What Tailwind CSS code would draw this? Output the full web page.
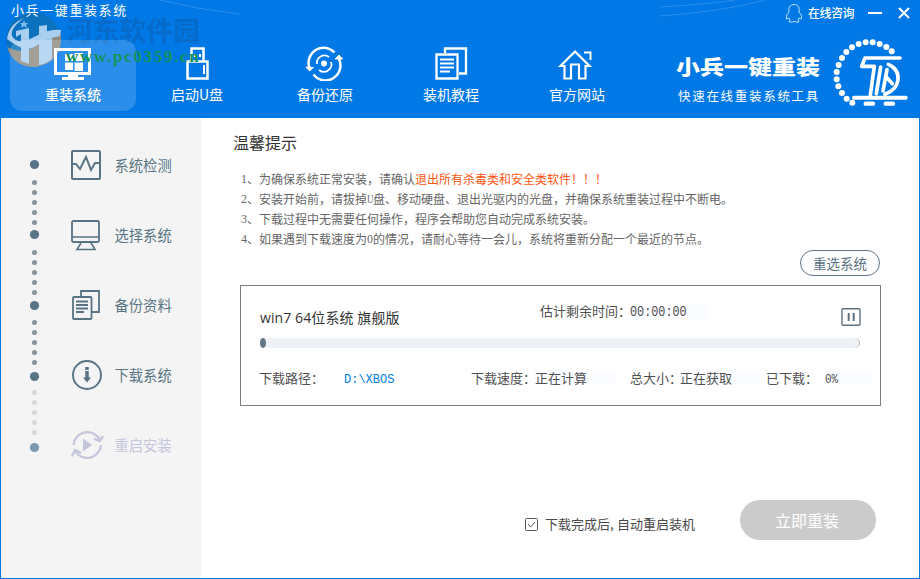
<!DOCTYPE html>
<html lang="zh-CN">
<head>
<meta charset="utf-8">
<title>小兵一键重装系统</title>
<script src="https://cdn.jsdelivr.net/npm/@tailwindcss/browser@4"></script>
</head>
<body class="w-[920px] h-[579px] overflow-hidden bg-white font-['Noto_Sans_CJK_SC',sans-serif]">
<div class="relative flex flex-col w-[920px] h-[579px] border-x border-b border-[#0078e0]">
  <header class="relative flex h-[118px] shrink-0 bg-[#0078e6] text-white -mx-px px-px">
    <svg class="absolute left-0 top-0" width="920" height="118" fill="none" stroke="#3a9af0" stroke-width=".7"><path d="M160 0Q200 10 240 14M660 7Q710 4 735 0M660 16Q720 12 765 0"/></svg>
    <!-- watermark emblem -->
    <svg class="absolute left-[4px] top-[10px]" width="60" height="60" viewBox="0 0 60 60">
      <circle cx="29" cy="29" r="27" fill="#0c72bd"/>
      <path d="M3 37Q20 46 36 33T57 24Q59 52 32 57Q10 58 3 37Z" fill="#8e8c84"/>
      <path d="M3 29Q5 14 20 8Q6 18 8 26Q14 36 30 27T57 20L56 26Q42 28 32 36T3 29ZM12 27V21L25 18V54L17 51V24ZM35 55V16L43 15V30L48 28V49Q42 54 35 55Z" fill="#a9cff0"/>
      <path d="m20 10 1 3h3l-2 2 1 3-3-2-3 2 1-3-2-2h3Z" fill="#80bff3"/>
    </svg>
    <div class="relative z-10 flex flex-col w-[640px]">
      <h1 class="h-[22px] pl-[10px] text-[13px] leading-[20px] tracking-[1.6px] font-normal">小兵一键重装系统</h1>
      <nav class="flex h-[90px] pl-[9px] pt-[18px] text-[14px]">
        <a class="flex flex-col items-center w-[126px] h-[71px] rounded-[12px] bg-white/17 pt-[5px]">
          <svg width="40" height="36" viewBox="0 0 40 36"><path d="M2.500 4.500h34v24h-34Z" fill="none" stroke="#fff" stroke-width="3"/><path d="M12 9h8v7h-8ZM21.500 8H30v8h-8.500ZM12 17.500h8V25h-8ZM21.500 17.500H30V26h-8.500ZM15 29h10v3h6v3H9v-3h6Z" fill="#fff"/></svg>
          <span class="leading-[20px] mt-[3px] font-medium">重装系统</span>
        </a>
        <a class="flex flex-col items-center w-[122px] h-[71px] pt-[5px]">
          <svg width="40" height="36" viewBox="0 0 40 36" fill="none" stroke="#fff" stroke-width="2.500"><path d="M14.500 16V3.500h12V16M10.500 16.500h20v17h-20Z"/><path d="M18 9v3M23 9v3M27 20v9" stroke-width="2"/></svg>
          <span class="leading-[20px] mt-[3px]">启动U盘</span>
        </a>
        <a class="flex flex-col items-center w-[126px] ml-[4px] h-[71px] pt-[5px]">
          <svg width="40" height="36" viewBox="0 0 40 36" fill="none" stroke="#fff" stroke-width="2.500"><path d="M29.500 7.500A15 15 0 0 0 4.500 23M8.500 29.500A15 15 0 0 0 34 14"/><path d="m1 22 3.500 4 4-3.500ZM30 14l4-4 3.500 4Z" fill="#fff" stroke-width="1"/><path d="M24 12a7.500 7.500 0 0 0-12 7M14 25a7.500 7.500 0 0 0 12-8" stroke-width="1.700"/><circle cx="19" cy="18.500" r="3" fill="#fff" stroke="none"/></svg>
          <span class="leading-[20px] mt-[3px]">备份还原</span>
        </a>
        <a class="flex flex-col items-center w-[126px] h-[71px] pt-[5px]">
          <svg width="40" height="36" viewBox="0 0 40 36" fill="none" stroke="#fff" stroke-width="2.300"><path d="M14 8V3.500h21v25h-7M5.500 9.500h21v24h-21Z"/><path d="M9 14.500h14M9 18.500h14M9 22.500h14M9 26.500h10" stroke-width="2"/></svg>
          <span class="leading-[20px] mt-[3px]">装机教程</span>
        </a>
        <a class="flex flex-col items-center w-[126px] h-[71px] pt-[5px]">
          <svg width="40" height="36" viewBox="0 0 40 36" fill="none" stroke="#fff" stroke-width="2.200"><path d="M7.500 21v12.500h6.500v-14h8v14h6.500V21h4L18 6.500 3.500 21Z"/><path d="M27 7.500h6.500V15" stroke-width="2"/></svg>
          <span class="leading-[20px] mt-[3px]">官方网站</span>
        </a>
      </nav>
    </div>
    <div class="flex flex-col flex-1">
      <div class="flex items-center h-[26px] pl-[144px]">
        <svg width="18" height="20" viewBox="0 0 18 20" fill="none" stroke="#b8dcfb" stroke-width="1"><path d="M4 9C3 3 6 1.500 9 1.500S15 3 14 9c2 2 3 4 2.500 7L14 15l-1 2 1 2H10l-1-1-1 1H4l1-2-1-2-2.500 1C1 13 2 11 4 9Z"/></svg>
        <span class="ml-[5px] w-[46px] whitespace-nowrap text-[12px] tracking-[-.5px] font-medium">在线咨询</span>
        <svg class="ml-[13px]" width="44" height="20" viewBox="0 0 44 20" stroke="#fff" stroke-width="2"><path d="M1 10h14M32 5l10 10M42 5 32 15"/></svg>
      </div>
      <div class="flex pl-[35px]">
        <div class="w-[157px] shrink-0 pt-[26px] whitespace-nowrap">
          <div class="-mt-px text-[24px] leading-[30px] font-black scale-y-85">小兵一键重装</div>
          <div class="mt-[5px] pl-[2px] text-[12.500px] leading-[20px] tracking-[1.700px]">快速在线重装系统工具</div>
        </div>
        <svg class="mt-[11px] shrink-0" width="80" height="72" viewBox="520 110 240 216" fill="none" stroke="#fff" stroke-linecap="round">
          <g fill="#fff" stroke="none"><circle cx="696" cy="153" r="9"/><circle cx="680" cy="140" r="9"/><circle cx="660" cy="131" r="9"/><circle cx="639" cy="126" r="9"/><circle cx="618" cy="126" r="9"/><circle cx="597" cy="131" r="9"/><circle cx="577" cy="141" r="9"/><circle cx="560" cy="155" r="9"/><circle cx="547" cy="173" r="9"/><circle cx="537" cy="194" r="9"/><circle cx="531" cy="215" r="9"/><circle cx="531" cy="237" r="9"/><circle cx="536" cy="258" r="9"/><circle cx="547" cy="278" r="9"/><circle cx="561" cy="295" r="9"/><circle cx="578" cy="307" r="9"/></g>
          <path d="M583 292H738" stroke-width="12"/><path d="M618 310h22M678 310h22" stroke-width="13"/>
          <g stroke-linejoin="round" stroke-width="11"><path d="M721 173H616L606 198H644L632 284M650 280 663 200"/><path d="M670 272 682 208M682 232 698 250M686 192Q718 206 715 238Q712 268 676 282"/></g>
        </svg>
      </div>
    </div>
    <div class="absolute left-[66px] top-[12px] whitespace-nowrap text-[26.800px] leading-[36px] font-bold text-[#0867c2]/75">河东软件园</div>
    <div class="absolute z-20 left-[66px] top-[46px] whitespace-nowrap font-['Liberation_Serif',serif] text-[17px] leading-[22px] tracking-[1.700px] font-bold text-[#159459]">www.pc0359.cn</div>
  </header>

  <div class="flex flex-1 min-h-0">
    <aside class="flex w-[200px] shrink-0 bg-[#f4f4f4] text-[#587484]">
      <svg width="60" height="340" viewBox="0 0 60 340" fill="none" stroke-linecap="round">
        <path d="M33.500 64.500v40.100M33.500 134.500v40.100M33.500 204.500v40.100" stroke="#87939a" stroke-width="5" stroke-dasharray="0 10"/>
        <path d="M33.500 274.500v40.100" stroke="#d5d9dc" stroke-width="5" stroke-dasharray="0 10"/>
        <g fill="#587487"><circle cx="33.500" cy="46.500" r="4.600"/><circle cx="33.500" cy="116.500" r="4.600"/><circle cx="33.500" cy="187.500" r="4.600"/><circle cx="33.500" cy="258.500" r="4.600"/></g><circle cx="33.500" cy="329.500" r="4.600" fill="#7c99b0"/>
      </svg>
      <ul class="pt-[12px] pl-[8px] text-[14.300px]">
        <li class="flex items-center h-[70px] gap-[9.500px]"><svg width="36" height="36" viewBox="0 0 36 36" fill="none" stroke="currentColor" stroke-width="2"><rect x="3" y="4" width="28" height="28" rx="1"/><path d="M4 17h3l4 5 6-12 5 13 4-7h5"/></svg>系统检测</li>
        <li class="flex items-center h-[70px] gap-[9.500px]"><svg width="36" height="36" viewBox="0 0 36 36" fill="none" stroke="currentColor" stroke-width="1.800"><rect x="3" y="4" width="27" height="21" rx="1.500"/><path d="M3 20h27M12 26l-4 6.500h18l-4-6.500" stroke-width="1.600"/></svg>选择系统</li>
        <li class="flex items-center h-[70px] gap-[9.500px]"><svg width="36" height="36" viewBox="0 0 36 36" fill="none" stroke="currentColor" stroke-width="1.800"><path d="M12 9V4h18v21h-7"/><rect x="4" y="10" width="18.500" height="22" rx="1"/><path d="M7 14.500h12M7 18h12M7 21.500h12M7 25h8"/></svg>备份资料</li>
        <li class="flex items-center h-[70px] gap-[9.500px]"><svg width="36" height="36" viewBox="0 0 36 36" fill="none" stroke="currentColor" stroke-width="1.900"><circle cx="18" cy="18" r="14"/><path d="M18 10v3M18 14v7" stroke-width="3.500"/><path d="m14 20.500 4 5 4-5Z" fill="currentColor" stroke="none"/></svg>下载系统</li>
        <li class="flex items-center h-[70px] gap-[9.500px] text-[#c5c6dc]"><svg width="36" height="36" viewBox="0 0 36 36" fill="none" stroke="currentColor" stroke-width="2.300"><path d="M4.500 18A14 14 0 0 1 31 13M32 18A14 14 0 0 1 6 24"/><path d="m25 12 6 2 3-5M3 29l3-6 6 3"/><path d="M14 11.500v13l9-6.500Z" fill="currentColor" stroke="none"/></svg>重启安装</li>
      </ul>
    </aside>

    <main class="flex-1 flex flex-col">
      <h2 class="mt-[12px] ml-[32px] h-[24px] text-[16px] leading-[24px] text-[#333]">温馨提示</h2>
      <ol class="mt-[15px] ml-[40px] text-[12px] leading-[20px] text-[#666] whitespace-nowrap">
        <li class="flex h-[20px]"><span class="w-[6px] font-['Liberation_Serif']">1</span>、为确保系统正常安装，请确认<span class="text-[#ff5512]">退出所有杀毒类和安全类软件！！！</span></li>
        <li class="flex h-[20px]"><span class="w-[6px] font-['Liberation_Serif']">2</span>、安装开始前，请拔掉<span class="w-[6px] font-['Liberation_Serif'] text-[9px]"><span class="inline-block scale-y-130">U</span></span>盘、移动硬盘、退出光驱内的光盘，并确保系统重装过程中不断电。</li>
        <li class="flex h-[20px]"><span class="w-[6px] font-['Liberation_Serif']">3</span>、下载过程中无需要任何操作，程序会帮助您自动完成系统安装。</li>
        <li class="flex h-[20px]"><span class="w-[6px] font-['Liberation_Serif']">4</span>、如果遇到下载速度为<span class="w-[6px] font-['Liberation_Serif']">0</span>的情况，请耐心等待一会儿，系统将重新分配一个最近的节点。</li>
      </ol>
      <button class="mt-[1px] ml-[599px] w-[80px] h-[26px] shrink-0 rounded-full border border-[#647688] text-[13.500px] leading-[22px] text-[#587080]">重选系统</button>
      <section class="mt-[9px] ml-[39px] w-[641px] h-[121px] shrink-0 border border-[#7f7f7f] px-[19px] text-[13px] text-[#505050]">
        <div class="flex h-[52px] whitespace-nowrap">
          <div class="w-[280px] shrink-0 pt-[21px] text-[14px] leading-[22px] tracking-[.1px] text-[#333] font-['Open_Sans','Noto_Sans_CJK_SC',sans-serif]">win7 64位系统 旗舰版</div>
          <div class="w-[301px] shrink-0 pt-[15px] leading-[20px] flex">
            <span class="w-[90px]">估计剩余时间：</span><span class="mt-[3px] w-[79px] h-[17px] bg-[#fbfcff] font-['Liberation_Mono'] text-[11.800px] leading-[16px]"><span class="inline-block scale-y-120">00:00:00</span></span>
          </div>
          <svg class="mt-[22px] shrink-0" width="20" height="18" viewBox="0 0 20 18" fill="none" stroke="#60717f"><rect x="1" y=".750" width="18" height="16.500" rx="1" stroke-width="1.400"/><path d="M7.700 5v8M12.700 5v8" stroke-width="2"/></svg>
        </div>
        <div class="h-[10px] w-[600px] rounded-r-[5px] bg-[#edf1f5] border-r border-[#b9bdc1]"><div class="w-[6px] h-[10px] rounded-[50%] bg-[#617789]"></div></div>
        <div class="flex mt-[20px] leading-[20px] whitespace-nowrap -ml-px *:shrink-0">
          <span class="w-[85px]">下载路径：</span><span class="w-[127px] text-[#0080e8] font-['Liberation_Mono'] text-[12px] leading-[24px] h-[20px]">D:\XBOS</span>
          <span class="w-[64px]">下载速度：</span><span class="mt-[2px] w-[80px] h-[14px] bg-[#fbfcff] leading-[15px]">正在计算</span><span class="w-[15px]"></span>
          <span class="w-[50px]">总大小：</span><span class="mt-[2px] w-[80px] h-[14px] bg-[#fbfcff] leading-[15px]">正在获取</span>
          <span class="w-[6px]"></span><span class="w-[59px]">已下载：</span><span class="mt-[2px] w-[48px] h-[14px] bg-[#fbfcff] font-['Liberation_Mono'] text-[11px] leading-[18px]"><span class="inline-block scale-y-120">0%</span></span>
        </div>
      </section>
      <div class="flex items-center mt-[94px] ml-[324px] h-[40px]">
        <svg class="mt-[9px] shrink-0" width="13" height="13" viewBox="0 0 13 13" fill="none" stroke="#555"><rect x=".5" y=".5" width="12" height="12" rx="1"/><path d="m3 6 2.500 3L10 4"/></svg>
        <span class="ml-[7px] mt-[8px] w-[195px] shrink-0 text-[13px] text-[#4a4a4a] whitespace-nowrap">下载完成后<span class="inline-block w-[7px]">,</span>自动重启装机</span>
        <button class="w-[136px] h-[40px] shrink-0 rounded-full bg-[#cbcbcb] text-white text-[16px] pr-[2px]">立即重装</button>
      </div>
    </main>
  </div>
</div>
</body>
</html>
